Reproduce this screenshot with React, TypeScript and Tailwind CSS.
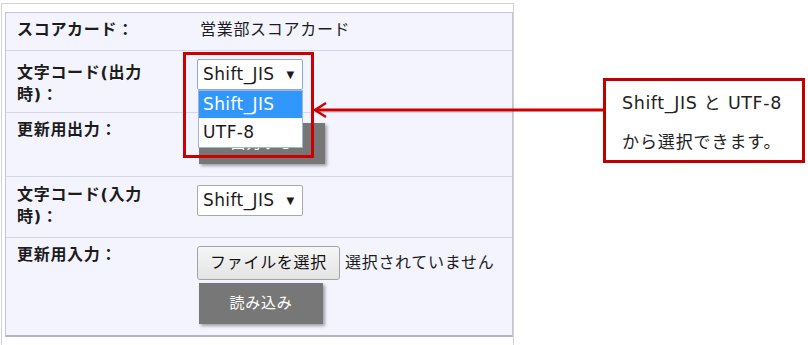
export default function App() {
  return (
    <div className="relative w-[808px] h-[345px] overflow-hidden bg-white font-['DejaVu_Sans','Noto_Sans_CJK_JP',sans-serif] text-[16px] tracking-[0.7px] text-[#1c1c1c]">
      {/* outer frame */}
      <div className="ml-px mt-[3px] h-[342px] w-[513px] border-l border-r border-t border-[#d3d3d3] pl-[3px] pt-[8px]">
        {/* settings panel */}
        <div className="w-[508px] border-x border-t border-b-2 border-[#c4c4d2] border-b-[#b4b4c8] bg-[#f4f4fe]">
          {/* score card */}
          <div className="grid h-[38px] grid-cols-[191px_1fr] border-b border-[#d6d6ea]">
            <div className="pl-[11px] pt-[6px] font-bold leading-[22px]">スコアカード：</div>
            <div className="pl-[3px] pt-[6px] leading-[22px]">営業部スコアカード</div>
          </div>

          {/* charset out */}
          <div className="grid h-[62px] grid-cols-[191px_1fr] border-b border-[#d6d6ea]">
            <div className="pl-[11px] pt-[11px] font-bold leading-[22px]">
              文字コード(出力
              <br />
              時)：
            </div>
            <div className="pt-[8px]">
              <div className="flex h-[31px] w-[106px] items-center justify-between rounded-[2px] border border-[#89abd6] bg-white pl-[5px] pr-[7px]">
                <span className="text-[17px] tracking-[0.4px]">Shift_JIS</span>
                <span className="text-[10px]">▼</span>
              </div>
            </div>
          </div>

          {/* export */}
          <div className="grid h-[64px] grid-cols-[191px_1fr] border-b border-[#d6d6ea]">
            <div className="pl-[11px] pt-[6px] font-bold leading-[22px]">更新用出力：</div>
            <div className="pl-[2px] pt-[10px]">
              <div className="flex h-[41px] w-[126px] items-center justify-center bg-[#777777] text-[15px] text-white shadow-[2px_2px_3px_rgba(0,0,0,0.35)]">
                出力する
              </div>
            </div>
          </div>

          {/* charset in */}
          <div className="grid h-[61px] grid-cols-[191px_1fr] border-b border-[#d6d6ea]">
            <div className="pl-[11px] pt-[7px] font-bold leading-[22px]">
              文字コード(入力
              <br />
              時)：
            </div>
            <div className="pt-[8px]">
              <div className="flex h-[31px] w-[106px] items-center justify-between rounded-[2px] border border-[#a9a9a9] bg-white pl-[5px] pr-[7px]">
                <span className="text-[17px] tracking-[0.4px]">Shift_JIS</span>
                <span className="text-[10px]">▼</span>
              </div>
            </div>
          </div>

          {/* import */}
          <div className="grid h-[97px] grid-cols-[191px_1fr]">
            <div className="pl-[11px] pt-[6px] font-bold leading-[22px]">更新用入力：</div>
            <div className="pt-[8px]">
              <div className="flex items-center gap-[5px]">
                <div className="flex h-[34px] w-[143px] items-center justify-center rounded-[3px] border border-[#a3a3a3] bg-gradient-to-b from-[#f6f6f6] to-[#e4e4e4] text-[#111]">
                  ファイルを選択
                </div>
                <span className="whitespace-nowrap">選択されていません</span>
              </div>
              <div className="ml-[2px] mt-[3px] flex h-[41px] w-[124px] items-center justify-center bg-[#777777] text-[15px] text-white shadow-[2px_2px_3px_rgba(0,0,0,0.35)]">
                読み込み
              </div>
            </div>
          </div>
        </div>
      </div>

      {/* open dropdown list */}
      <div className="absolute left-[198px] top-[90px] w-[105px] border border-[#9fb6d6] bg-white text-[17px] tracking-[0.4px]">
        <div className="flex h-[27px] items-center bg-[#3297fd] pl-[4px] text-white">Shift_JIS</div>
        <div className="flex h-[29px] items-center pl-[4px]">UTF-8</div>
      </div>

      {/* highlight frame */}
      <div className="absolute left-[183px] top-[52px] h-[106px] w-[131px] border-[3px] border-[#cc0000]" />

      {/* arrow */}
      <svg className="absolute left-[312px] top-[100px]" width="295" height="20" viewBox="0 0 295 20">
        <line x1="3" y1="10" x2="294" y2="10" stroke="#cc0000" strokeWidth="3" />
        <polyline points="14,3 3,10 14,17" fill="none" stroke="#cc0000" strokeWidth="2.5" />
      </svg>

      {/* callout */}
      <div className="absolute left-[603px] top-[78px] h-[85px] w-[202px] border-[3px] border-[#c00000] bg-white pl-[16px] pt-[3px] text-[17px] tracking-[0.9px] leading-[39px] text-[#222]">
        <div className="whitespace-nowrap">
          <span className="text-[17.5px] tracking-[0.6px]">Shift_JIS</span> と <span className="text-[17.5px] tracking-[0.6px]">UTF-8</span>
        </div>
        <div className="whitespace-nowrap">から選択できます。</div>
      </div>
    </div>
  );
}
